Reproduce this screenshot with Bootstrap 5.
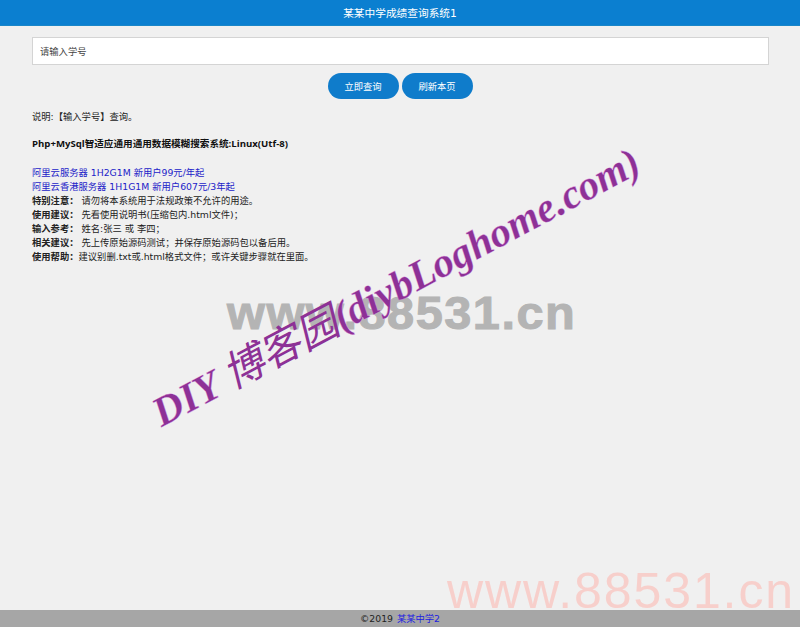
<!DOCTYPE html>
<html lang="zh-CN">
<head>
<meta charset="utf-8">
<title>某某中学成绩查询系统1</title>
<link rel="stylesheet" href="https://cdn.jsdelivr.net/npm/bootstrap@5.3.0/dist/css/bootstrap.min.css">
<style>
html,body{height:100%;overflow:hidden}
body{background:#f0f0f0;color:#222;font-family:"DejaVu Sans","Noto Sans CJK SC",sans-serif;font-size:9.3px;line-height:14px}
.app-shell{height:627px;position:relative;overflow:hidden}
.top-bar{background:#0b7fd0;color:#fff;height:26px;line-height:28px;font-size:10.7px;text-align:center;border-bottom:1px solid #1a86c8}
.search-wrap{padding:11px 31px 0 32px}
.search-input{height:28px;border:1px solid #d4d4d4;border-radius:0;padding:0 7px;font-size:9.3px;background:#fff;color:#333;box-shadow:none}
.search-input::placeholder{color:#444;opacity:1}
.action-row{margin-top:8px;gap:3px}
.pill-btn{width:71px;height:26px;padding:0;border:0;border-radius:13px;background:#0f7ccb;color:#fff;font-size:9.3px;line-height:27px}
.info-block{padding:0 32px;margin-top:11px}
.info-block p{margin:0}
.gap-first{height:13px}
.gap-second{height:15px}
.info-head{font-weight:700;color:#111;font-family:"Open Sans","Noto Sans CJK SC",sans-serif;font-size:9.6px}
.info-block a{color:#2222c8;text-decoration:none;display:block}
.bottom-bar{margin-top:auto;height:17px;background:#a6a6a6;line-height:18px;padding-left:360px;color:#222;position:relative;z-index:3}
.bottom-bar a{color:#1d1de0;text-decoration:none;margin-left:1px}
.mark-grey,.mark-diy,.mark-pink{position:absolute;white-space:nowrap;pointer-events:none}
.mark-grey{left:227px;top:287px;font:700 46px/52px "Liberation Sans",sans-serif;letter-spacing:1.4px;color:#b4b4b4;transform:scaleX(1.06);transform-origin:0 50%;-webkit-text-stroke:1px #b4b4b4}
.mark-diy{left:155px;top:390px;font:italic 700 41.4px/50px "Liberation Serif","Noto Sans CJK SC",serif;color:#8d3196;transform:rotate(-28deg);transform-origin:0 50%;-webkit-text-stroke:.3px #e9b6ee}
.mark-diy span{font-weight:400;-webkit-text-stroke:0}
.mark-pink{left:447px;top:559px;font:400 50px/64px "Liberation Sans",sans-serif;letter-spacing:1.9px;color:#f7cfcb}
</style>
</head>
<body>
<div class="app-shell d-flex flex-column">
  <header class="top-bar">某某中学成绩查询系统1</header>
  <div class="search-wrap">
    <input class="form-control search-input" type="text" placeholder="请输入学号">
  </div>
  <div class="action-row d-flex justify-content-center">
    <button class="btn pill-btn" type="button">立即查询</button>
    <button class="btn pill-btn" type="button">刷新本页</button>
  </div>
  <main class="info-block">
    <p>说明:【输入学号】查询。</p>
    <div class="gap-first"></div>
    <p class="info-head">Php+MySql智适应通用通用数据模糊搜索系统:Linux(Utf-8)</p>
    <div class="gap-second"></div>
    <a href="#">阿里云服务器 1H2G1M 新用户99元/年起</a>
    <a href="#">阿里云香港服务器 1H1G1M 新用户607元/3年起</a>
    <p><b>特别注意：</b> 请勿将本系统用于法规政策不允许的用途。</p>
    <p><b>使用建议：</b> 先看使用说明书(压缩包内.html文件)；</p>
    <p><b>输入参考：</b> 姓名:张三 或 李四；</p>
    <p><b>相关建议：</b> 先上传原始源码测试；并保存原始源码包以备后用。</p>
    <p><b>使用帮助：</b>建议别删.txt或.html格式文件；或许关键步骤就在里面。</p>
  </main>
  <footer class="bottom-bar">©2019 <a href="#">某某中学2</a></footer>
  <div class="mark-grey">www.88531.cn</div>
  <div class="mark-diy">DIY <span>博客园</span>(diybLoghome.com)</div>
  <div class="mark-pink">www.88531.cn</div>
</div>
<script src="https://cdn.jsdelivr.net/npm/bootstrap@5.3.0/dist/js/bootstrap.bundle.min.js"></script>
</body>
</html>
